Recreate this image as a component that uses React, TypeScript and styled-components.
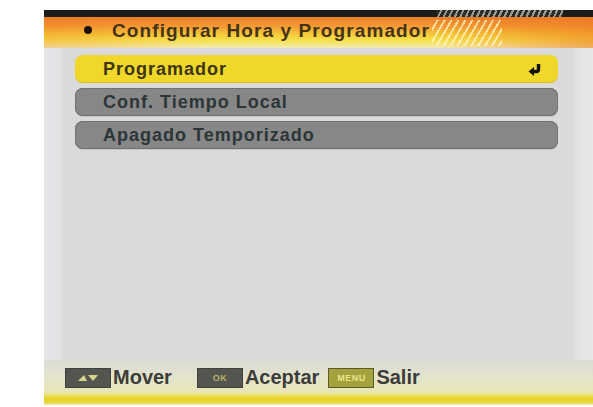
import React from "react";
import styled, { createGlobalStyle } from "styled-components";

const GlobalStyle = createGlobalStyle`
  html, body {
    margin: 0;
    padding: 0;
    background: #ffffff;
  }
  body {
    font-family: "Liberation Sans", Arial, sans-serif;
  }
`;

const Screen = styled.div`
  margin: 10px 0 0 44px;
  width: 549px;
  height: 395px;
  display: flex;
  flex-direction: column;
  overflow: hidden;
`;

const TopBand = styled.div`
  height: 7px;
  display: flex;
  background: #1c1c1a;
`;

const Hatch = styled.div`
  margin-left: 393px;
  width: 126px;
  background: repeating-linear-gradient(
    115deg,
    #2a2a26 0px,
    #2a2a26 3px,
    #9a9a90 3px,
    #9a9a90 5px
  );
`;

const Header = styled.div`
  height: 31px;
  display: flex;
  align-items: center;
  padding-left: 40px;
  background:
    linear-gradient(90deg, rgba(240, 120, 30, 0.25) 0%, rgba(240, 120, 30, 0) 30%, rgba(240, 120, 30, 0) 70%, rgba(238, 118, 30, 0.55) 100%),
    linear-gradient(180deg, #ee7e2c 0%, #f39a34 30%, #f5c83a 55%, #f6e04c 75%, #f2ecb8 100%);
`;

const Bullet = styled.span`
  width: 8px;
  height: 8px;
  border-radius: 50%;
  background: #1a1208;
  margin-right: 20px;
  margin-top: -5px;
`;

const Title = styled.span`
  font-size: 19px;
  font-weight: 700;
  letter-spacing: 1.1px;
  color: #453318;
  white-space: nowrap;
  margin-top: -3px;
`;

const Stripes = styled.span`
  width: 70px;
  height: 26px;
  margin-left: 2px;
  background: repeating-linear-gradient(
    120deg,
    rgba(255, 250, 200, 0) 0px,
    rgba(255, 250, 200, 0) 4px,
    rgba(255, 250, 200, 0.7) 4px,
    rgba(255, 250, 200, 0.7) 6px
  );
`;

const Body = styled.div`
  flex: 1;
  display: flex;
  flex-direction: column;
  gap: 5px;
  padding: 7px 0 0 31px;
  background: linear-gradient(
    90deg,
    #e6e6ea 0px,
    #e3e3e6 16px,
    #dadada 20px,
    #dadada 528px,
    #e4e4e4 534px,
    #e8e8e8 549px
  );
`;

const Row = styled.div<{ $active?: boolean }>`
  width: 483px;
  height: 28px;
  box-sizing: border-box;
  display: flex;
  align-items: center;
  justify-content: space-between;
  padding: 0 16px 0 28px;
  border-radius: 8px;
  background: ${(p) => (p.$active ? "#efd82a" : "#878787")};
  box-shadow: ${(p) =>
    p.$active
      ? "inset 0 -1px 0 #d8c020"
      : "inset 0 0 0 1px #727272, 0 1px 0 #c4c4c4"};
  font-size: 18px;
  font-weight: 700;
  letter-spacing: 1px;
  color: ${(p) => (p.$active ? "#3e3512" : "#2c3636")};
`;

const Footer = styled.div`
  height: 45px;
  box-sizing: border-box;
  display: flex;
  align-items: center;
  padding: 0 0 10px 21px;
  background: linear-gradient(
    180deg,
    #dcdcd6 0%,
    #e4e4cc 40%,
    #e8e6b8 70%,
    #ece070 78%,
    #ead62e 84%,
    #e6d42a 92%,
    #efe9a8 100%
  );
`;

const KeyBox = styled.span<{ $tone?: "dark" | "olive" }>`
  width: 46px;
  height: 20px;
  box-sizing: border-box;
  display: inline-flex;
  align-items: center;
  justify-content: center;
  background: ${(p) => (p.$tone === "olive" ? "#a4a23c" : "#555550")};
  border: 1px solid ${(p) => (p.$tone === "olive" ? "#5a5a22" : "#404040")};
  font-size: 9px;
  font-weight: 700;
  color: ${(p) => (p.$tone === "olive" ? "#e8e690" : "#b8b468")};
  letter-spacing: 0.5px;
`;

const KeyLabel = styled.span<{ $gap: number }>`
  font-size: 20px;
  font-weight: 700;
  color: #3c3c3a;
  margin-left: 2px;
  margin-right: ${(p) => p.$gap}px;
`;

const EnterIcon = () => (
  <svg width="14" height="13" viewBox="0 0 14 13">
    <path d="M10.5 1 V6.5 Q10.5 8.5 8.5 8.5 H5.5" stroke="#151208" strokeWidth="3.4" fill="none" />
    <polygon points="0.5,8.5 6,4 6,13" fill="#151208" />
  </svg>
);

const ArrowsGlyph = () => (
  <svg width="22" height="8" viewBox="0 0 22 8">
    <polygon points="1,7 7,1 10,7" fill="#d6d48c" />
    <polygon points="11,1 21,1 16,7" fill="#d6d48c" />
  </svg>
);

const items = [
  { label: "Programador", active: true },
  { label: "Conf. Tiempo Local", active: false },
  { label: "Apagado Temporizado", active: false },
];

export default function App() {
  return (
    <>
      <GlobalStyle />
      <Screen>
        <TopBand>
          <Hatch />
        </TopBand>
        <Header>
          <Bullet />
          <Title>Configurar Hora y Programador</Title>
          <Stripes />
        </Header>
        <Body>
          {items.map((it) => (
            <Row key={it.label} $active={it.active}>
              <span>{it.label}</span>
              {it.active && <EnterIcon />}
            </Row>
          ))}
        </Body>
        <Footer>
          <KeyBox>
            <ArrowsGlyph />
          </KeyBox>
          <KeyLabel $gap={25}>Mover</KeyLabel>
          <KeyBox>OK</KeyBox>
          <KeyLabel $gap={9}>Aceptar</KeyLabel>
          <KeyBox $tone="olive">MENU</KeyBox>
          <KeyLabel $gap={0}>Salir</KeyLabel>
        </Footer>
      </Screen>
    </>
  );
}
